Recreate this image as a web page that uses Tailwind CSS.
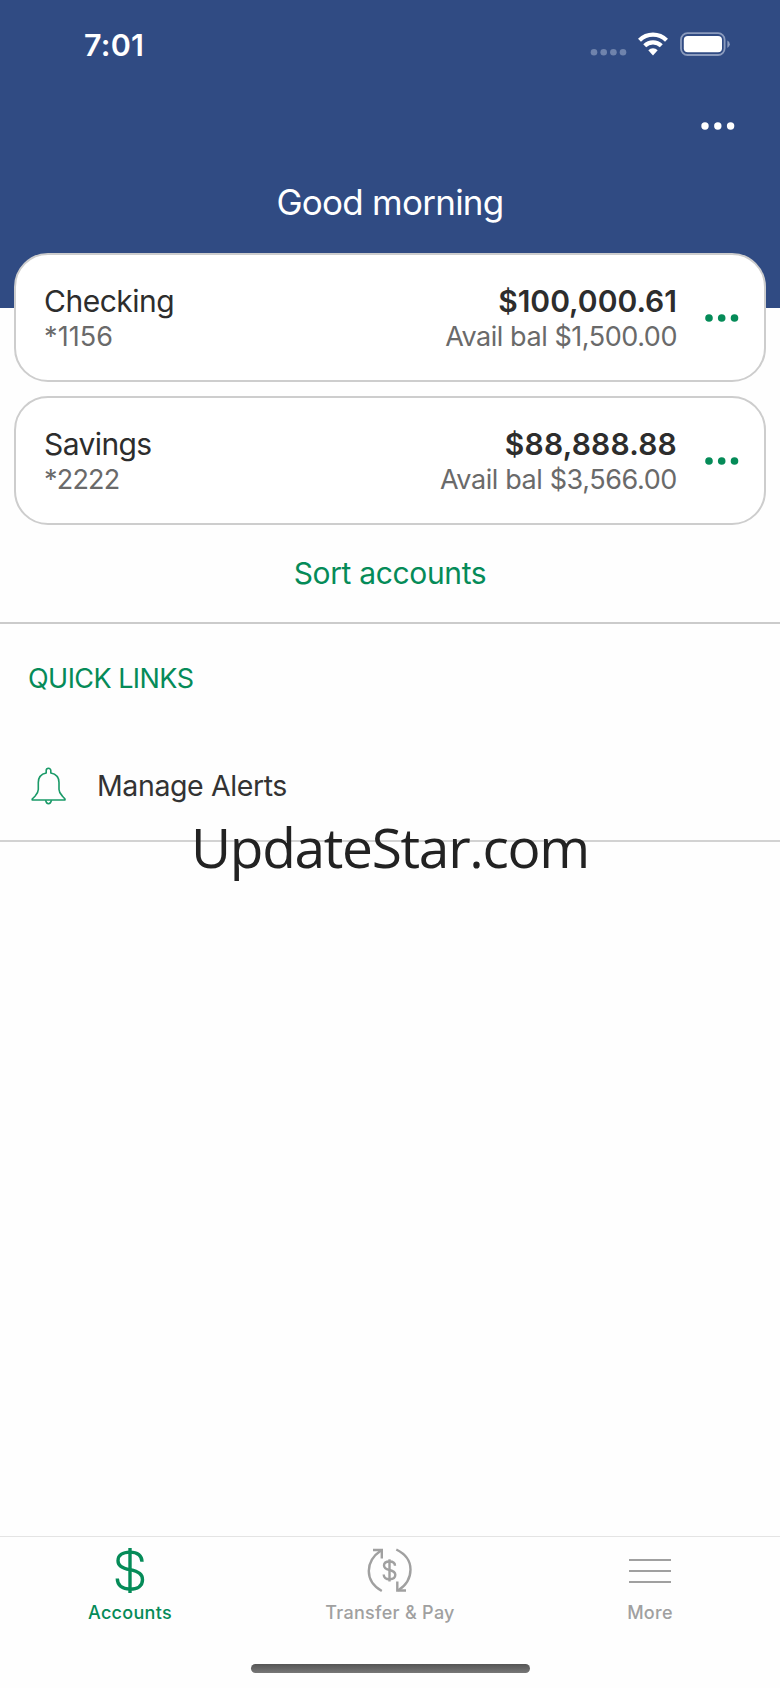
<!DOCTYPE html>
<html lang="en">
<head>
  <meta charset="UTF-8">
  <meta name="viewport" content="width=device-width, initial-scale=1.0">
  <title>Accounts</title>
  <script src="https://cdn.jsdelivr.net/npm/@tailwindcss/browser@4"></script>
</head>
<body class="bg-white font-['Inter',sans-serif]">
  <div class="relative flex flex-col w-[780px] h-[1688px] overflow-hidden bg-[#fefefe]">

    <!-- Header -->
    <header class="h-[308px] shrink-0 bg-[#304b83] text-white">
      <div class="flex items-center justify-between h-[88px] pl-[84px] pr-[50px]">
        <span class="pt-[2px] text-[30.5px] leading-none font-semibold tracking-[0.2px] whitespace-nowrap">7:01</span>
        <svg class="w-[140px] h-[24px]" viewBox="0 0 140 24" fill="none">
          <g fill="#6f83ac">
            <circle cx="4" cy="20.3" r="3.3" />
            <circle cx="13.7" cy="20.3" r="3.3" />
            <circle cx="23.4" cy="20.3" r="3.3" />
            <circle cx="33" cy="20.3" r="3.3" />
          </g>
          <g stroke="#fff" stroke-width="4.2">
            <path d="M49.5 8.2a19.3 19.3 0 0 1 27 0" />
            <path d="M54.7 13.7a12 12 0 0 1 16.6 0" />
          </g>
          <path d="M58.3 18.2a6.9 6.9 0 0 1 9.4 0L63 23.4z" fill="#fff" />
          <rect x="91" y="1.2" width="43.6" height="21.8" rx="6.5" stroke="#8b9bbd" stroke-width="1.8" />
          <rect x="93.8" y="4" width="38.2" height="16.2" rx="4" fill="#fff" />
          <path d="M137.4 8.5q2.4 1.2 2.4 3.7t-2.4 3.7z" fill="#8b9bbd" />
        </svg>
      </div>
      <div class="flex items-center justify-end h-[76px] pr-[45px]">
        <svg class="w-[34px] h-[8px]" viewBox="0 0 34 8" fill="#fff">
          <circle cx="4" cy="4" r="3.7" />
          <circle cx="16.8" cy="4" r="3.7" />
          <circle cx="29.6" cy="4" r="3.7" />
        </svg>
      </div>
      <h1 class="pt-[17px] text-center text-[35px] leading-[42px] tracking-[-0.75px] whitespace-nowrap">Good morning</h1>
    </header>

    <!-- Accounts -->
    <section class="relative -mt-[55px] flex flex-col gap-[14px] px-[14px]">
      <div class="flex items-center h-[129px] rounded-[34px] border-2 border-[#cdcdcd] bg-white pl-[28px] pr-[25px]">
        <div class="flex-1 pt-[1px]">
          <p class="text-[30px] leading-[36px] tracking-[-0.5px] text-[#2d2d2d]">Checking</p>
          <p class="text-[27px] leading-[35px] tracking-[0.1px] text-[#6a6a6a]">*1156</p>
        </div>
        <div class="pt-[1px] text-right">
          <p class="text-[30px] leading-[36px] font-semibold text-[#2d2d2d]">$100,000.61</p>
          <p class="text-[27px] leading-[35px] tracking-[-0.45px] text-[#6a6a6a]">Avail bal $1,500.00</p>
        </div>
        <svg class="ml-[27px] w-[35px] h-[8px]" viewBox="0 0 35 8" fill="#058b58">
          <circle cx="5" cy="4" r="3.8" />
          <circle cx="17.7" cy="4" r="3.8" />
          <circle cx="30.5" cy="4" r="3.8" />
        </svg>
      </div>
      <div class="flex items-center h-[129px] rounded-[34px] border-2 border-[#cdcdcd] bg-white pl-[28px] pr-[25px]">
        <div class="flex-1 pt-[1px]">
          <p class="text-[30px] leading-[36px] tracking-[-0.6px] text-[#2d2d2d]">Savings</p>
          <p class="text-[27px] leading-[35px] tracking-[-0.8px] text-[#6a6a6a]">*2222</p>
        </div>
        <div class="pt-[1px] text-right">
          <p class="text-[30px] leading-[36px] font-semibold tracking-[0.2px] text-[#2d2d2d]">$88,888.88</p>
          <p class="text-[27px] leading-[35px] tracking-[-0.4px] text-[#6a6a6a]">Avail bal $3,566.00</p>
        </div>
        <svg class="ml-[27px] w-[35px] h-[8px]" viewBox="0 0 35 8" fill="#058b58">
          <circle cx="5" cy="4" r="3.8" />
          <circle cx="17.7" cy="4" r="3.8" />
          <circle cx="30.5" cy="4" r="3.8" />
        </svg>
      </div>
    </section>
    <div class="flex items-start justify-center h-[99px] pt-[30px] border-b-2 border-[#cbcbcb]">
      <a class="text-[30px] leading-[36px] tracking-[-0.35px] text-[#058b58]">Sort accounts</a>
    </div>

    <!-- Quick links -->
    <section class="h-[218px] border-b-2 border-[#d2d2d2]">
      <h2 class="pt-[38px] pl-[28px] text-[27px] leading-[34px] tracking-[-0.55px] text-[#058b58]">QUICK LINKS</h2>
      <div class="flex items-center mt-[71px] h-[38px] pl-[31px]">
        <svg class="w-[36px] h-[38px]" viewBox="0 0 36 38" fill="none" stroke="#1a9a68" stroke-width="1.6" stroke-linejoin="round">
          <path d="M15.2 6V3.6a2.3 2.3 0 0 1 4.6 0V6C25 7 28 10.5 28 15.5V22.5C28 25.5 29.5 27 31.5 29.2L34 32V33H1.2V32L4 29.2C6 27 7.3 25.5 7.3 22.5V15.5C7.3 10.5 10.3 7 15.2 6Z" />
          <path d="M14.6 33.2C15 35.5 15.8 36.8 17.5 36.8S20 35.5 20.5 33.2" />
        </svg>
        <span class="ml-[30px] text-[28.5px] leading-[36px] tracking-[-0.4px] text-[#333]">Manage Alerts</span>
      </div>
    </section>

    <p class="absolute top-[809px] left-0 w-full text-center font-['Open_Sans',sans-serif] text-[55px] leading-[76px] tracking-[-1.3px] whitespace-nowrap text-[#222]">UpdateStar.com</p>

    <!-- Tab bar -->
    <nav class="mt-auto h-[152px] border-t border-[#e4e4e4]">
      <div class="grid grid-cols-3 text-[18px] leading-[24px] font-medium tracking-[0.3px] text-[#a0a0a0]">
        <div class="flex flex-col items-center pt-[10px] text-[#058b58]">
          <svg class="w-[30px] h-[46px]" viewBox="0 0 30 46" fill="none" stroke="currentColor" stroke-width="3.4">
            <path d="M15 1V46.5" />
            <path d="M27 14.8C27 8.5 22.5 5.1 15 5.1S3 8.3 3 13.7C3 18.5 6.5 20.8 15 22.7C24 24.7 27.5 27.3 27.5 32.7C27.5 39 22.5 42.1 15 42.1S2.3 38.5 2.3 31.5" />
          </svg>
          <span class="mt-[8px]">Accounts</span>
        </div>
        <div class="flex flex-col items-center pt-[10px]">
          <svg class="w-[46px] h-[46px]" viewBox="0 0 46 46" fill="none" stroke="currentColor" stroke-width="2.4">
            <path d="M14.8 44C6 39 1.8 31.5 1.8 24C1.8 15.5 6.5 8.5 14 3.5" />
            <path d="M6 3H14.8V11.5" />
            <path d="M29.3 2.5C38.5 7 43.5 14 43.5 22.5C43.5 31 39 38.5 31 43.5" />
            <path d="M30.3 34.5V43.5H39" />
            <path d="M22.5 12.3V34.5" />
            <path d="M28 18.8C28 16 26 14.5 22.5 14.5S17 16 17 18.5C17 21 18.8 22 22.5 23C26.5 24 28.3 25.3 28.3 27.8C28.3 30.8 26 32.3 22.5 32.3S16.7 30.5 16.7 27.5" />
          </svg>
          <span class="mt-[8px]">Transfer &amp; Pay</span>
        </div>
        <div class="flex flex-col items-center pt-[10px]">
          <svg class="w-[42px] h-[46px]" viewBox="0 0 42 46" fill="none" stroke="currentColor" stroke-width="2">
            <path d="M0 13H42M0 24H42M0 35H42" />
          </svg>
          <span class="mt-[8px]">More</span>
        </div>
      </div>
      <div class="mx-auto mt-[39px] w-[279px] h-[9px] rounded-full bg-linear-to-b from-[#555] to-[#777]"></div>
    </nav>
  </div>
</body>
</html>
